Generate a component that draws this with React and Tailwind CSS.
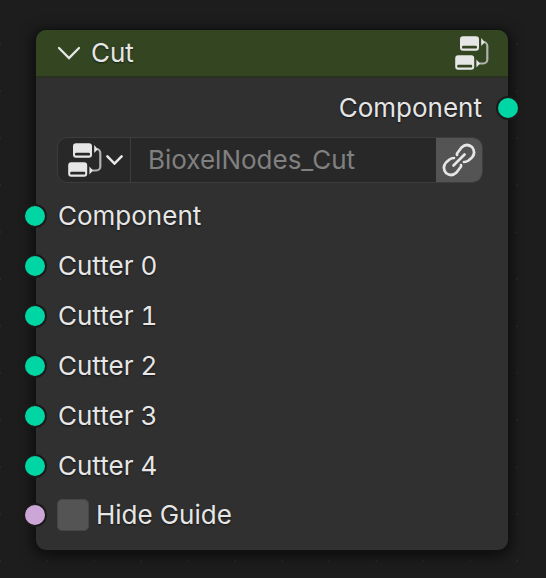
import React from "react";

function ChevronDown({ className, strokeWidth = 2.3 }) {
  return (
    <svg className={className} viewBox="0 0 24 14" fill="none" stroke="#e6e6e6" strokeWidth={strokeWidth} strokeLinecap="round" strokeLinejoin="miter" aria-hidden="true">
      <path d="M2 2 L12 12 L22 2" />
    </svg>
  );
}

function NodeTreeIcon() {
  return (
    <svg className="size-[34px] shrink-0" viewBox="0 0 34 34" fill="none" aria-hidden="true">
      <path fill="#e6e6e6" fillRule="evenodd" d="M8 0.300h13a3 3 0 0 1 3 3v8.500a3 3 0 0 1-3 3h-13a3 3 0 0 1-3-3v-8.500a3 3 0 0 1 3-3zM8.200 9.800a1.200 1.200 0 0 0-1.200 1.200v.4a1.200 1.200 0 0 0 1.200 1.200h12.600a1.200 1.200 0 0 0 1.200-1.200v-.4a1.200 1.200 0 0 0-1.200-1.200z" />
      <path fill="#e6e6e6" fillRule="evenodd" d="M3.200 19.200h13a3 3 0 0 1 3 3v8.500a3 3 0 0 1-3 3h-13a3 3 0 0 1-3-3v-8.500a3 3 0 0 1 3-3zM3.400 28.800a1.200 1.200 0 0 0-1.200 1.200v.4a1.200 1.200 0 0 0 1.200 1.200h12.600a1.200 1.200 0 0 0 1.200-1.200v-.4a1.200 1.200 0 0 0-1.200-1.200z" />
      <path stroke="#b0b3ad" strokeWidth="2.200" d="M27.500 6h.8a4 4 0 0 1 4 4v13.500a4 4 0 0 1-4 4h-5" />
      <path fill="#e6e6e6" d="M26.200 2l3.600 4.200-3.600 3.900zM21.400 23.500l3.600 4.100-3.600 4z" />
    </svg>
  );
}

function LinkIcon() {
  return (
    <svg className="size-9" viewBox="0 0 36 36" fill="none" stroke="#e6e6e6" strokeWidth="2.7" strokeLinecap="round" strokeLinejoin="round" aria-hidden="true">
      <path d="M12.500 23.500 L23.500 12.500" />
      <path d="M16 13 V11.500 L20.500 5.500 Q25.500 0.800 31 5 Q35.200 10.500 31 15.500 L27.500 18.500 Q25.500 20 23 20" />
      <path d="M20 23 V24.500 L15.500 30.500 Q10.500 35.200 5 31 Q0.800 25.500 5 20.500 L8.500 17.500 Q10.500 16 13 16" />
    </svg>
  );
}

function Socket({ className }) {
  return <span className={`size-5 shrink-0 rounded-full ring-2 ring-[#1a1a1a] ${className}`} />;
}

const inputs = ["Component", "Cutter 0", "Cutter 1", "Cutter 2", "Cutter 3", "Cutter 4"];

export default function App() {
  return (
    <main className="min-h-screen bg-[#1d1d1d] bg-[radial-gradient(circle,#292929_1px,transparent_1px)] bg-[size:47px_47px] bg-[position:24px_21px] pt-[30px] pr-[38px] pb-7 pl-9 font-['Inter',sans-serif] text-[26px] leading-8 tabular-nums text-[#e6e6e6]">
      <section className="rounded-[10px] bg-[#303030] shadow-[0_0_0_1px_#121212,0_3px_14px_3px_rgba(0,0,0,0.6)] [text-shadow:0_1px_2px_rgba(0,0,0,0.6)]">
        <header className="flex h-12 items-center rounded-t-[10px] border-b-2 border-[#28321f] bg-[#344621] pr-[19px] pl-[21px]">
          <button type="button" aria-label="Collapse node" className="mr-[10px]">
            <ChevronDown className="h-[14px] w-6" />
          </button>
          <h1 className="flex-1">Cut</h1>
          <NodeTreeIcon />
        </header>

        <div className="px-[22px] pt-[5px] pb-[11px]">
          <div className="flex h-[50px] items-center justify-end">
            <span>Component</span>
            <Socket className="-mr-[32px] ml-4 bg-[#00d6a3]" />
          </div>

          <div className="mt-1 mr-[3px] mb-2 -ml-px flex h-[46px] overflow-hidden rounded-[10px] border border-[#3d3d3d] bg-[#282828]">
            <button type="button" aria-label="Browse node groups" className="flex w-[73px] shrink-0 items-center gap-1 border-r border-[#3d3d3d] pl-[10px]">
              <NodeTreeIcon />
              <ChevronDown className="h-[10px] w-[17px]" strokeWidth={3.6} />
            </button>
            <input type="text" aria-label="Node group name" defaultValue="BioxelNodes_Cut" className="min-w-0 flex-1 bg-transparent px-[17px] text-[#808080] outline-none" />
            <button type="button" aria-label="Linked library data" className="flex w-[46px] shrink-0 items-center justify-center bg-[#545454]">
              <LinkIcon />
            </button>
          </div>

          {inputs.map((name) => (
            <div key={name} className="flex h-[50px] items-center">
              <Socket className="mr-[13px] -ml-[33px] bg-[#00d6a3]" />
              <span>{name}</span>
            </div>
          ))}

          <div className="flex h-12 items-center">
            <Socket className="mr-3 -ml-[33px] bg-[#cca6d6]" />
            <label className="flex items-center gap-[7px]">
              <input type="checkbox" className="size-8 appearance-none rounded-[5px] border border-[#474747] bg-[#545454]" />
              Hide Guide
            </label>
          </div>
        </div>
      </section>
    </main>
  );
}
